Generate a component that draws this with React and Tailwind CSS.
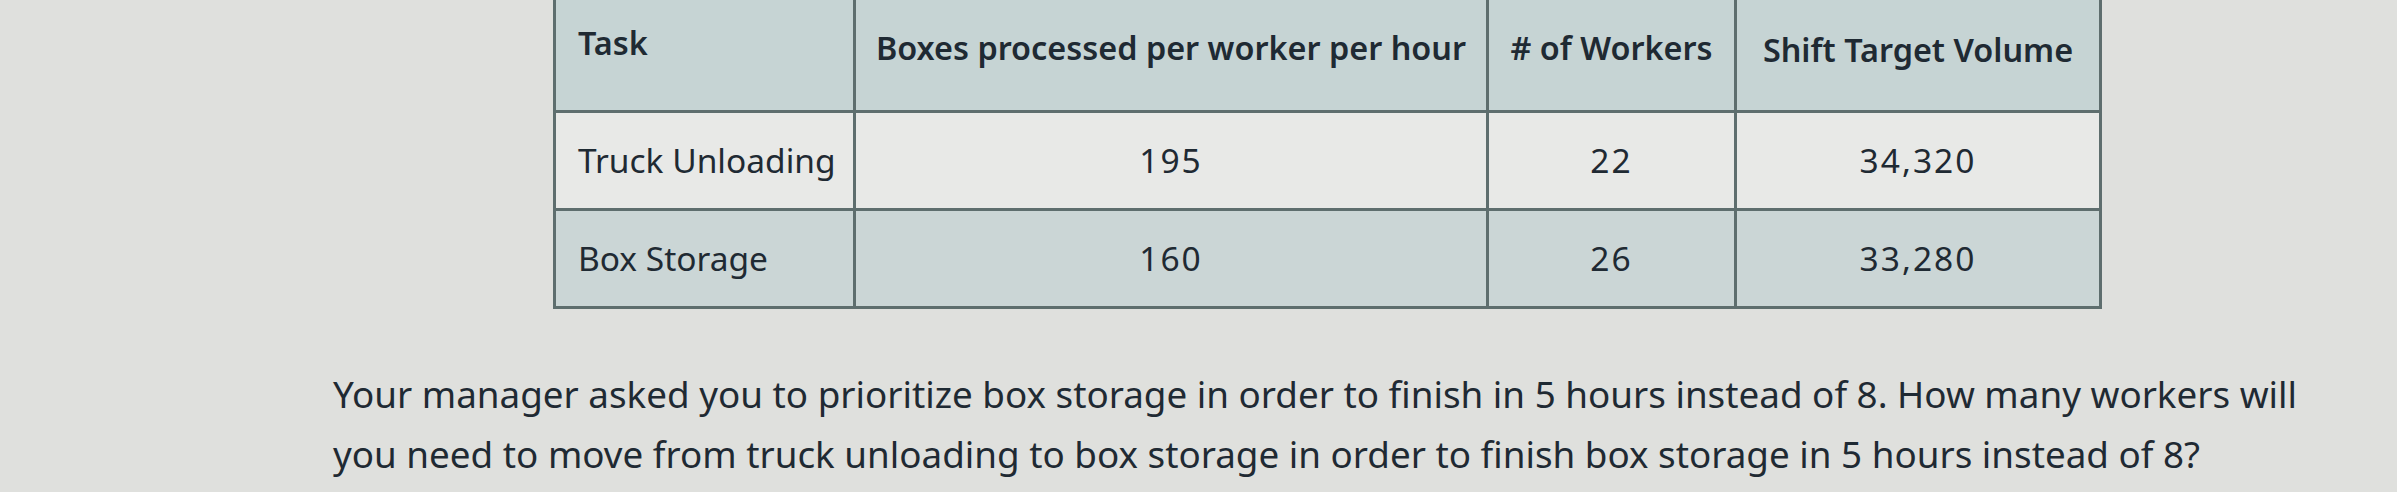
import React from 'react';

const rows = [
    { task: 'Truck Unloading', rate: '195', workers: '22', target: '34,320', bg: 'bg-[#e8e9e7]' },
    { task: 'Box Storage', rate: '160', workers: '26', target: '33,280', bg: 'bg-[#cbd6d6]' },
];

const App = () => {
    return (
        <div className="w-[2397px] h-[492px] overflow-hidden bg-[#dfe0dd] text-[#1f2a33] font-['Noto_Sans',sans-serif]">
            <table className="ml-[553px] w-[1546px] border-collapse border-[3px] border-t-0 border-[#5e6e6e] table-fixed">
                <colgroup>
                    <col className="w-[300px]" />
                    <col className="w-[633px]" />
                    <col className="w-[248px]" />
                    <col className="w-[365px]" />
                </colgroup>
                <thead>
                    <tr className="bg-[#c6d4d4] h-[111px]">
                        <th className="border-[3px] border-t-0 border-[#5e6e6e] text-left align-top pt-[18px] px-[22px] text-[32.4px] font-semibold">Task</th>
                        <th className="border-[3px] border-t-0 border-[#5e6e6e] text-center align-top pt-[23px] text-[32.4px] font-semibold whitespace-nowrap">Boxes processed per worker per hour</th>
                        <th className="border-[3px] border-t-0 border-[#5e6e6e] text-center align-top pt-[23px] text-[32.4px] font-semibold whitespace-nowrap">
                            # of Workers
                        </th>
                        <th className="border-[3px] border-t-0 border-[#5e6e6e] text-center align-top pt-[25px] text-[32.4px] font-semibold whitespace-nowrap">
                            Shift Target Volume
                        </th>
                    </tr>
                </thead>
                <tbody>
                    {rows.map((r) => (
                        <tr key={r.task} className={`${r.bg} h-[98px] text-[33.5px]`}>
                            <td className="border-[3px] border-[#5e6e6e] pl-[22px] pr-0 whitespace-nowrap">{r.task}</td>
                            <td className="border-[3px] border-[#5e6e6e] text-center tracking-[2px]">{r.rate}</td>
                            <td className="border-[3px] border-[#5e6e6e] text-center tracking-[2px]">{r.workers}</td>
                            <td className="border-[3px] border-[#5e6e6e] text-center tracking-[2px]">{r.target}</td>
                        </tr>
                    ))}
                </tbody>
            </table>
            <p className="ml-[333px] mt-[55px] text-[36.8px] leading-[60px] whitespace-nowrap">
                Your manager asked you to prioritize box storage in order to finish in 5 hours instead of 8. How many workers will
                <br />
                you need to move from truck unloading to box storage in order to finish box storage in 5 hours instead of 8?
            </p>
        </div>
    );
};

export default App;
